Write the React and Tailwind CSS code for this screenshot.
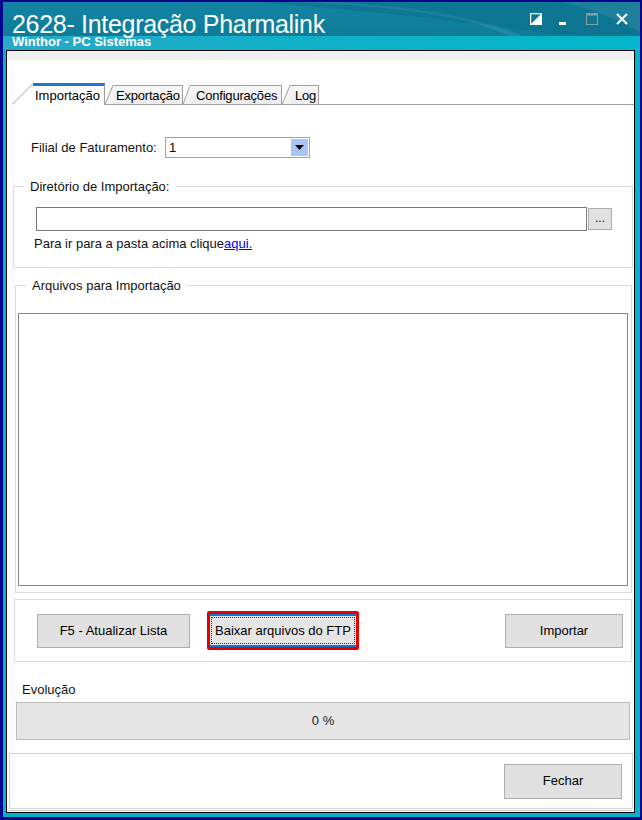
import React from 'react';

const font = { fontFamily: '"Liberation Sans", Arial, sans-serif' };

// Slanted left edge of a tab
const Slant = ({ width, active }) => (
  <svg width={width} height={active ? 22 : 20} className="block shrink-0">
    {active ? (
      <line x1="0" y1="21.5" x2={width} y2="0.5" stroke="#a0a0a0" strokeWidth="1" />
    ) : (
      <>
        <polygon points={`0,20 ${width},0 ${width},20`} fill="#f3f3f3" />
        <line x1="0" y1="19.5" x2={width} y2="0.5" stroke="#a0a0a0" strokeWidth="1" />
        <line x1="0" y1="19.5" x2={width} y2="19.5" stroke="#a0a0a0" strokeWidth="1" />
      </>
    )}
  </svg>
);

const Tab = ({ label, width, slant, pad, active }) => (
  <div className="flex items-end">
    <Slant width={slant} active={active} />
    {active ? (
      <div
        className="h-[22px] bg-white border-t-[3px] border-t-[#1b78d0] border-r border-r-[#a0a0a0] flex items-center text-[13px] text-black leading-none"
        style={{ width, paddingLeft: pad }}
      >
        {label}
      </div>
    ) : (
      <div
        className="h-[20px] bg-gradient-to-b from-[#f8f8f8] to-[#ececec] border-t border-r border-b border-[#a0a0a0] flex items-center text-[13px] text-black leading-none tracking-[-0.2px]"
        style={{ width, paddingLeft: pad }}
      >
        {label}
      </div>
    )}
  </div>
);

const WinButton = ({ children, className = '' }) => (
  <button
    className={`h-[34px] bg-[#e1e1e1] border border-[#adadad] text-[13px] text-black flex items-center justify-center ${className}`}
  >
    {children}
  </button>
);

export default function App() {
  return (
    <div
      className="w-[642px] h-[820px] bg-[#04048c] pl-[3px] pr-[2px] pt-[2px] pb-[3px] flex"
      style={font}
    >
      <div className="flex-1 flex flex-col bg-[#05b3c9]">
        {/* Title bar */}
        <div className="relative h-[48px] shrink-0 overflow-hidden bg-gradient-to-b from-[#1283a2] via-[#0f7f9c] to-[#0b7791]">
          <svg className="absolute inset-0" width="637" height="48">
            <defs>
              <linearGradient id="band" x1="0" y1="0" x2="1" y2="0">
                <stop offset="0" stopColor="#2aa8c8" />
                <stop offset="0.45" stopColor="#10b0c8" />
                <stop offset="1" stopColor="#03b6cb" />
              </linearGradient>
            </defs>
            <path d="M250 0 C 380 10, 470 20, 560 34 L 637 34 L 637 0 Z" fill="#0b6e89" opacity="0.55" />
            <path d="M330 0 C 420 6, 470 14, 520 34 L 505 34 C 470 16, 410 6, 300 0 Z" fill="#ffffff" opacity="0.08" />
            <path d="M560 0 C 600 10, 620 20, 637 30 L 637 0 Z" fill="#ffffff" opacity="0.08" />
            <rect x="0" y="34" width="637" height="14" fill="url(#band)" />
          </svg>

          <div className="relative pl-[9px] pt-[10px] text-white">
            <div className="text-[25px] leading-none tracking-[-0.3px]">2628- Integração Pharmalink</div>
            <div className="text-[13px] font-bold leading-none mt-[-2px]">Winthor - PC Sistemas</div>
          </div>

          {/* Window controls */}
          <div className="absolute top-[11px] right-[12px] flex items-start">
            <svg width="12" height="12" className="mr-[17px]">
              <rect x="0.5" y="0.5" width="11" height="11" fill="none" stroke="#ffffff" strokeWidth="1.5" />
              <polygon points="11,1 11,11 1,11" fill="#ffffff" />
            </svg>
            <svg width="8" height="12" className="mr-[19px]">
              <rect x="0" y="9" width="7" height="3" fill="#ffffff" />
            </svg>
            <svg width="12" height="12" className="mr-[18px]">
              <rect x="0.5" y="0.5" width="11" height="11" fill="none" stroke="#8a9ca6" strokeWidth="1" />
              <rect x="0" y="0" width="12" height="2.5" fill="#8a9ca6" />
            </svg>
            <svg width="12" height="12">
              <path d="M1 1 L11 11 M11 1 L1 11" stroke="#ffffff" strokeWidth="2" />
            </svg>
          </div>
        </div>

        {/* Client area */}
        <div className="ml-[3px] mr-[5px] mb-[4px] flex-1 border border-black flex flex-col bg-white">
          <div className="h-[9px] bg-[#f0f0f0] shrink-0" />

          <div className="flex-1 flex flex-col">
            {/* Tabs */}
            <div className="mt-[23px] ml-[5px] flex items-end h-[22px]">
              <Tab label="Importação" width={72} slant={21} pad={2} active />
              <Tab label="Exportação" width={70} slant={8} pad={3} />
              <Tab label="Configurações" width={92} slant={7} pad={6} />
              <Tab label="Log" width={29} slant={8} pad={5} />
              <div className="flex-1 border-b border-[#a0a0a0] h-[1px]" />
            </div>

            {/* Filial */}
            <div className="mt-[32px] ml-[24px] flex items-center h-[21px]">
              <span className="text-[13px] text-[#111] w-[134px]">Filial de Faturamento:</span>
              <div className="w-[145px] h-[21px] border border-[#a2a2a2] flex items-center justify-between pl-[3px] pr-[1px]">
                <span className="text-[13px] text-black leading-none">1</span>
                <div className="w-[17px] h-[17px] bg-[#a9c4f5] flex items-center justify-center">
                  <svg width="9" height="5">
                    <polygon points="0,0 9,0 4.5,5" fill="#000" />
                  </svg>
                </div>
              </div>
            </div>

            {/* Diretório de Importação */}
            <fieldset className="mt-[21px] ml-[6px] w-[620px] border border-[#dcdcdc] pl-[22px] pb-[16px]">
              <legend className="-ml-[12px] px-[6px] text-[13px] leading-[15px] text-[#111]">Diretório de Importação:</legend>
              <div className="mt-[13px] flex items-start">
                <div className="w-[551px] h-[24px] border border-[#7a7a7a] bg-white" />
                <button className="ml-[1px] mt-[1px] w-[24px] h-[22px] bg-[#e1e1e1] border border-[#adadad] text-[12px] leading-none text-black flex items-center justify-center pb-[2px]">
                  ...
                </button>
              </div>
              <div className="mt-[5px] -ml-[2px] text-[13px] leading-[15px] text-[#111]">
                Para ir para a pasta acima clique<a className="text-[#0000ff] underline">aqui.</a>
              </div>
            </fieldset>

            {/* Arquivos para Importação */}
            <fieldset className="mt-[10px] ml-[8px] w-[617px] border border-[#dcdcdc] pl-[2px] pb-[6px]">
              <legend className="ml-[8px] px-[6px] text-[13px] leading-[15px] text-[#111]">Arquivos para Importação</legend>
              <div className="mt-[20px] w-[610px] h-[273px] border border-[#828790] bg-white" />
            </fieldset>

            {/* Action buttons */}
            <div className="mt-[6px] ml-[7px] w-[618px] h-[63px] border border-[#dcdcdc] flex items-center pl-[22px] pr-[8px]">
              <WinButton className="w-[153px]">F5 - Atualizar Lista</WinButton>
              <div className="ml-[17px] w-[152px] h-[39px] border-[3px] border-[#e60000] rounded-[2px] flex">
                <button className="flex-1 bg-[#e5e5e5] border-y-2 border-[#0a7ad8] flex items-stretch p-[1px]">
                  <span className="flex-1 border border-dotted border-[#333] flex items-center justify-center text-[13px] text-black">
                    Baixar arquivos do FTP
                  </span>
                </button>
              </div>
              <div className="flex-1" />
              <WinButton className="w-[118px]">Importar</WinButton>
            </div>

            {/* Progress */}
            <div className="mt-[20px] ml-[15px] text-[13px] leading-[15px] text-[#111]">Evolução</div>
            <div className="mt-[5px] ml-[9px] w-[614px] h-[38px] bg-[#e6e6e6] border border-[#bcbcbc] flex items-center justify-center text-[13px] text-[#222]">
              0 %
            </div>

            {/* Footer */}
            <div className="mt-[13px] ml-[2px] w-[624px] h-[56px] border border-[#d6d6d6] flex items-center justify-end pr-[10px]">
              <WinButton className="w-[118px] h-[35px]">Fechar</WinButton>
            </div>
            <div className="flex-1" />
            <div className="h-[1px] bg-[#c8c8c8] mx-[2px] mb-[1px]" />
          </div>
        </div>
      </div>
    </div>
  );
}
